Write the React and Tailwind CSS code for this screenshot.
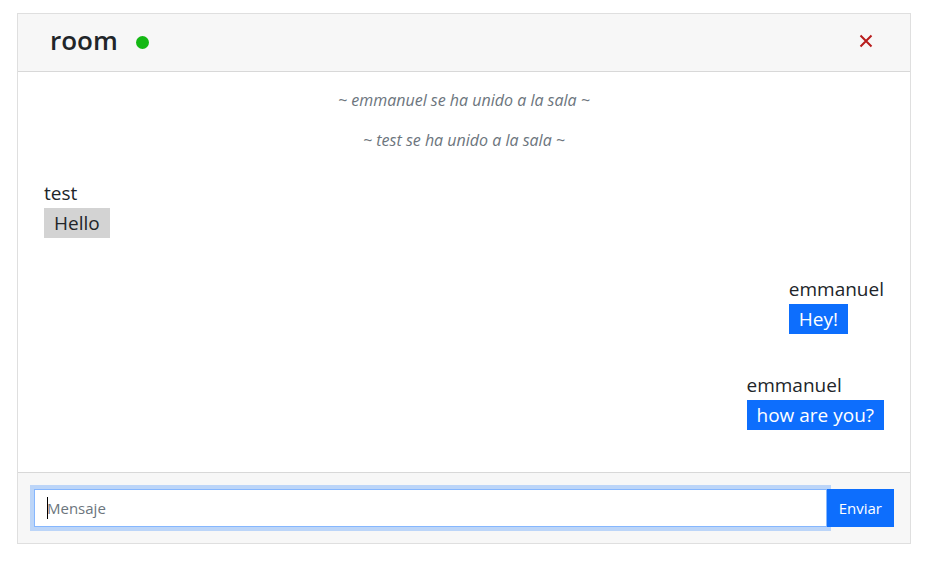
import { useState } from "react";

const notices = [
  "~ emmanuel se ha unido a la sala ~",
  "~ test se ha unido a la sala ~",
];

const messages = [
  { id: 1, author: "test", text: "Hello", own: false },
  { id: 2, author: "emmanuel", text: "Hey!", own: true },
  { id: 3, author: "emmanuel", text: "how are you?", own: true },
];

function Message({ author, text, own }) {
  return (
    <div className={own ? "flex justify-end" : "flex justify-start"}>
      <div className="mb-4 p-[10px] text-[19px] leading-[30px]">
        <div>{author}</div>
        <div
          className={
            own
              ? "w-fit bg-[#0d6efd] px-[10px] text-white"
              : "w-fit bg-[#d3d3d3] px-[10px]"
          }
        >
          {text}
        </div>
      </div>
    </div>
  );
}

export default function App() {
  const [draft, setDraft] = useState("");

  return (
    <main className="mx-[17px] mt-[13px] pr-px font-['Segoe_UI','Open_Sans','Noto_Sans',sans-serif] text-[#212529]">
      <section className="border border-[#dfdfdf] bg-white">
        <header className="flex items-center justify-between border-b border-[#d8d8d8] bg-[#f7f7f7] py-3 pr-[35px] pl-8">
          <h1 className="flex items-center gap-[18px] text-[26px] leading-[29px] font-semibold">
            <span className="pb-1">room</span>
            <span className="size-[13px] rounded-full bg-[#14b814]" />
          </h1>
          <button type="button" aria-label="Cerrar" className="mb-1 p-0.5 text-[#b81c1c]">
            <svg viewBox="0 0 14 14" className="size-[14px]" fill="none" stroke="currentColor" strokeWidth="2">
              <path d="M1.5 1.5 L12.5 12.5 M12.5 1.5 L1.5 12.5" />
            </svg>
          </button>
        </header>

        <div className="p-4">
          {notices.map((notice) => (
            <p key={notice} className="mb-4 text-center text-base leading-6 text-[#6c757d] italic">
              {notice}
            </p>
          ))}
          {messages.map((m) => (
            <Message key={m.id} author={m.author} text={m.text} own={m.own} />
          ))}
        </div>

        <form
          className="flex border-t border-[#d8d8d8] bg-[#f7f7f7] p-4"
          onSubmit={(e) => e.preventDefault()}
        >
          <div className="relative min-w-0 flex-1">
            <input
              type="text"
              aria-label="Mensaje"
              placeholder="Mensaje"
              value={draft}
              onChange={(e) => setDraft(e.target.value)}
              className="block h-[38px] w-full border border-[#86b7fe] bg-white px-3 text-[15px] leading-6 caret-transparent shadow-[0_0_0_4px_#0d6efd40] outline-none placeholder:text-[#6c757d]"
            />
            {draft === "" && (
              <span className="pointer-events-none absolute top-2 left-[13px] h-[22px] w-px bg-black" />
            )}
          </div>
          <button type="submit" className="relative h-[38px] bg-[#0d6efd] px-3 text-[15px] leading-6 text-white">
            Enviar
          </button>
        </form>
      </section>
    </main>
  );
}
